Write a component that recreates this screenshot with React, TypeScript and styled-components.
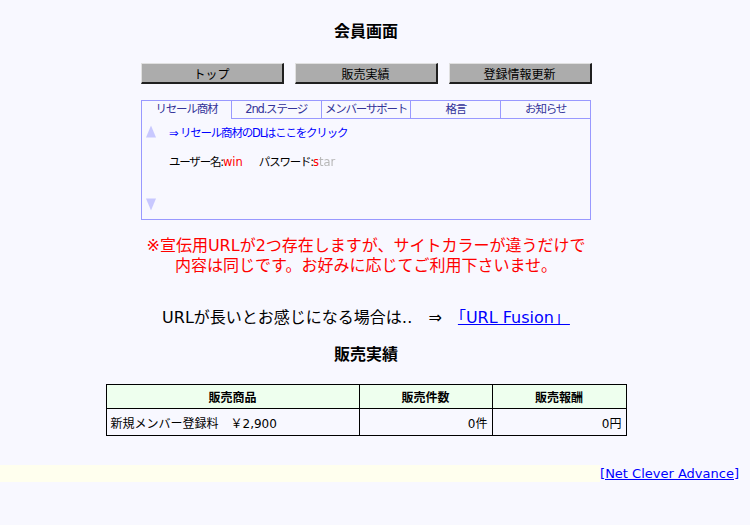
import React, { useState } from 'react';
import styled, { createGlobalStyle } from 'styled-components';

const GlobalStyle = createGlobalStyle`
  html, body {
    margin: 0;
    padding: 0;
    background: #f8f8ff;
    font-family: "DejaVu Sans", "Noto Sans CJK JP", sans-serif;
    color: #000;
  }
`;

const tabs = ['リセール商材', '2nd.ステージ', 'メンバーサポート', '格言', 'お知らせ'];

const App: React.FC = () => {
  const [activeTab, setActiveTab] = useState<number>(0);

  return (
    <>
      <GlobalStyle />
      <Page>
        <Title>会員画面</Title>

        <ButtonRow>
          <NavButton>トップ</NavButton>
          <NavButton>販売実績</NavButton>
          <NavButton>登録情報更新</NavButton>
        </ButtonRow>

        <TabBox>
          <TabHeader>
            {tabs.map((t, i) => (
              <Tab key={t} active={activeTab === i} onClick={() => setActiveTab(i)}>
                {t}
              </Tab>
            ))}
          </TabHeader>
          <TabBody>
            <ArrowColumn>
              <Arrow viewBox="0 0 10 12">
                <polygon points="5,0 10,12 0,12" />
              </Arrow>
              <Arrow viewBox="0 0 10 12">
                <polygon points="0,0 10,0 5,12" />
              </Arrow>
            </ArrowColumn>
            <TabContent>
              <DlLink href="#">⇒ リセール商材のDLはここをクリック</DlLink>
              <Credentials>
                ユーザー名:<Red>win</Red>
                <Gap />
                パスワード:<Red>s</Red><Blurred>tar</Blurred>
              </Credentials>
            </TabContent>
          </TabBody>
        </TabBox>

        <Notice>
          ※宣伝用URLが2つ存在しますが、サイトカラーが違うだけで
          <br />
          内容は同じです。お好みに応じてご利用下さいませ。
        </Notice>

        <UrlLine>
          URLが長いとお感じになる場合は‥　⇒　<UrlLink href="#">「URL Fusion」</UrlLink>
        </UrlLine>

        <SectionTitle>販売実績</SectionTitle>

        <SalesTable>
          <colgroup>
            <col style={{ width: 253 }} />
            <col style={{ width: 133 }} />
            <col style={{ width: 134 }} />
          </colgroup>
          <thead>
            <tr>
              <Th>販売商品</Th>
              <Th>販売件数</Th>
              <Th>販売報酬</Th>
            </tr>
          </thead>
          <tbody>
            <tr>
              <Td>新規メンバー登録料　￥2,900</Td>
              <Td align="right">0件</Td>
              <Td align="right">0円</Td>
            </tr>
          </tbody>
        </SalesTable>
      </Page>

      <Footer>
        <FooterFill />
        <FooterLink href="#">[Net Clever Advance]</FooterLink>
      </Footer>
    </>
  );
};

const Page = styled.div`
  width: 732px;
  display: flex;
  flex-direction: column;
  align-items: center;
  padding-top: 22px;
`;

const Title = styled.h1`
  margin: 0;
  font-size: 16px;
  line-height: 20px;
  font-weight: bold;
`;

const ButtonRow = styled.div`
  display: flex;
  gap: 11px;
  margin-top: 21px;
`;

const NavButton = styled.button`
  width: 143px;
  height: 21px;
  padding: 0;
  background: #acacac;
  border-style: solid;
  border-width: 1px 2px 2px 1px;
  border-color: #e0e0e0 #202020 #202020 #e0e0e0;
  font-family: "DejaVu Sans", "Noto Sans CJK JP", sans-serif;
  font-size: 12px;
  color: #000;
  cursor: pointer;
`;

const TabBox = styled.div`
  width: 448px;
  height: 118px;
  margin-top: 16px;
  border: 1px solid #9999ff;
  display: flex;
  flex-direction: column;
`;

const TabHeader = styled.div`
  display: flex;
  height: 18px;
`;

const Tab = styled.div<{ active: boolean }>`
  flex: 1;
  box-sizing: border-box;
  border-bottom: ${(p) => (p.active ? 'none' : '1px solid #9999ff')};
  border-left: 1px solid #9999ff;
  &:first-child {
    border-left: none;
  }
  font-size: 11.5px;
  letter-spacing: -1.2px;
  line-height: 17px;
  color: #333399;
  text-align: center;
  cursor: pointer;
  white-space: nowrap;
`;

const TabBody = styled.div`
  flex: 1;
  display: flex;
  padding: 6px 0 8px 4px;
`;

const ArrowColumn = styled.div`
  display: flex;
  flex-direction: column;
  justify-content: space-between;
  width: 10px;
`;

const Arrow = styled.svg`
  width: 10px;
  height: 13px;
  fill: #c8c8ff;
`;

const TabContent = styled.div`
  display: flex;
  flex-direction: column;
  margin-left: 13px;
  padding-top: 1px;
  font-size: 11.5px;
  letter-spacing: -1.2px;
  line-height: 14px;
`;

const DlLink = styled.a`
  color: #0000ff;
  text-decoration: none;
`;

const Credentials = styled.div`
  margin-top: 15px;
  color: #000;
`;

const Red = styled.span`
  color: #ff0000;
  letter-spacing: 0;
`;

const Blurred = styled.span`
  color: #b8b8b8;
  letter-spacing: 0;
  filter: blur(0.7px);
`;

const Gap = styled.span`
  display: inline-block;
  width: 16px;
`;

const Notice = styled.p`
  margin: 16px 0 0;
  font-size: 16px;
  line-height: 20px;
  color: #ff0000;
  text-align: center;
`;

const UrlLine = styled.p`
  margin: 32px 0 0;
  font-size: 16px;
  line-height: 20px;
`;

const UrlLink = styled.a`
  color: #0000ff;
  text-decoration: underline;
`;

const SectionTitle = styled.h2`
  margin: 17px 0 0;
  font-size: 16px;
  line-height: 20px;
  font-weight: bold;
`;

const SalesTable = styled.table`
  margin-top: 19px;
  width: 520px;
  border-collapse: collapse;
  table-layout: fixed;
  font-size: 12px;
`;

const Th = styled.th`
  height: 23px;
  padding: 0;
  background: #eeffee;
  border: 1px solid #000;
  font-weight: bold;
  text-align: center;
`;

const Td = styled.td<{ align?: string }>`
  height: 26px;
  padding: 0 4px;
  border: 1px solid #000;
  text-align: ${(p) => p.align || 'left'};
`;

const Footer = styled.div`
  display: flex;
  margin-top: 29px;
  height: 17px;
  padding-right: 11px;
`;

const FooterFill = styled.div`
  flex: 1;
  background: #ffffee;
`;

const FooterLink = styled.a`
  font-size: 13px;
  line-height: 17px;
  color: #0000ff;
  text-decoration: underline;
`;

export default App;
